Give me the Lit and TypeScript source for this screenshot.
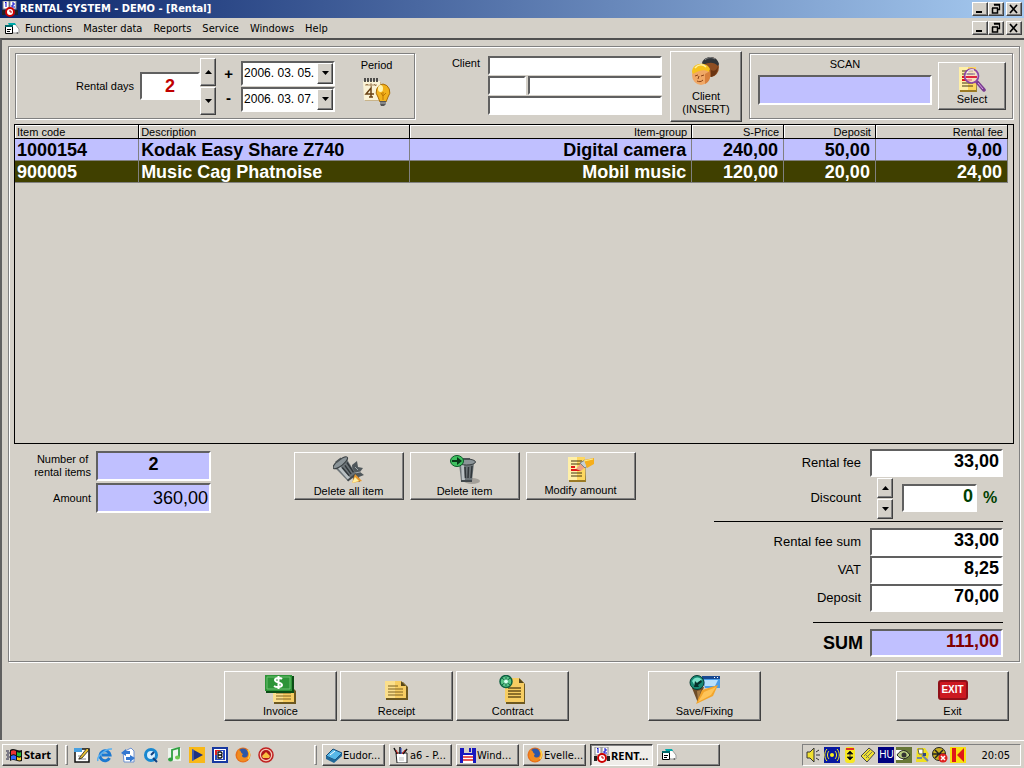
import { LitElement, html, css, svg } from "lit";
import { customElement, state } from "lit/decorators.js";

const icon = (w: number, h: number, body: unknown, vb = `0 0 ${w} ${h}`) =>
  html`<svg class="icon" width=${w} height=${h} viewBox=${vb} aria-hidden="true">${body}</svg>`;

const tri = (up: boolean) =>
  icon(7, 4, up ? svg`<path d="M3.5 0L7 4H0z"/>` : svg`<path d="M0 0H7L3.5 4z"/>`);

const rentalMark = svg`
  <rect x="1" y="0" width="6" height="8" fill="#fff" stroke="#888"/><rect x="8" y="0" width="6" height="8" fill="#fff" stroke="#888"/>
  <path d="M3 2l1-1v5M10 2h2v2h-2v2h3" stroke="#00c" fill="none"/>
  <path d="M0 9h3v5H0zM13 9h3v5h-3z" fill="#222"/>
  <circle cx="8" cy="11" r="4" fill="#fff" stroke="#c00" stroke-width="2"/><path d="M8 9v2h2" stroke="#c00" fill="none"/>`;

const formMark = svg`
  <path d="M5 3h6l4 5v4H9z" fill="#fff" stroke="#999"/><path d="M4 2h7l1 2H5z" fill="#0aa"/>
  <path d="M12 12l2-1v2z" fill="#555"/>
  <path d="M1.500 4.500h7v8h-7z" fill="#fff" stroke="#000"/><path d="M1 4h8v2H1z" fill="#066"/>
  <path d="M3 8.500h4M3 10.500h3" stroke="#000"/>`;

const calendar = () => icon(28, 30, svg`
  <path d="M2 23L1 4h17l2 19z" fill="#c9b48a"/><path d="M0 3h17l1 19H1z" fill="#fbf3d6"/>
  <path d="M2 0v4M5 0v4M8 0v4M11 0v4M14 0v4" stroke="#222" stroke-width="1.500"/>
  <path d="M3 8V6l1 1 1-1v2M7 6h2v2H7zM11 8V6l2 2V6" stroke="#886030" fill="none" stroke-width=".7"/>
  <path d="M8 19V10L3 16h8M6 19h4" fill="none" stroke="#6a4214" stroke-width="1.500"/>
  <path d="M20 6a8 8 0 0 0-5 13l2 5h6l2-5a8 8 0 0 0-5-13z" fill="#f2b21c" stroke="#a86c08"/>
  <ellipse cx="17.500" cy="10.500" rx="2.500" ry="3.500" fill="#fff3b0"/>
  <path d="M20 14v8M18 15l2 3 3-3" stroke="#c07800" fill="none"/>
  <path d="M17 23h6v3l-2 2h-3l-1-2z" fill="#555"/><path d="M17 25h6" stroke="#bbb"/>`);

const people = () => icon(30, 30, svg`
  <ellipse cx="20" cy="11" rx="8" ry="10" fill="#8f4f24"/><path d="M20 14c3 2 6 0 7-4 0 7-3 10-7 11z" fill="#6b3513"/>
  <path d="M11 7c2-7 14-9 17 1l-1 2c-4-4-9-4-15-1z" fill="#303438"/><path d="M14 4c3-3 7-3 10-1" stroke="#888" fill="none"/>
  <ellipse cx="10" cy="19" rx="9" ry="10" fill="#f0a866"/><path d="M14 28c5-2 6-8 5-13l-5 3z" fill="#d8803c"/>
  <path d="M1 16C1 6 16 5 19 13l-1 3c-4-3-10-2-16 2z" fill="#f6c21c"/><path d="M4 12c3-4 8-4 11-1" stroke="#fff0a0" stroke-width="1.500" fill="none"/>
  <path d="M4 20l3-1M10 20l3-1M6 25c2 1 4 1 6-1M8 20l-1 3" stroke="#8a4216" fill="none"/>`);

const sheet = (x: number, y: number) => svg`
  <path d="M${x + 1} ${y + 2}h16l1 23h-17z" fill="#9a7a24"/><path d="M${x} ${y}h17v23h-17z" fill="#fdd760"/>
  <path d="M${x} ${y}h9v23h-9z" fill="#fff0a8"/>
  <path d="M${x + 3} ${y + 4}h11M${x + 3} ${y + 7}h11M${x + 3} ${y + 16}h11M${x + 3} ${y + 19}h11" stroke="#443410"/>
  <path d="M${x + 3} ${y + 10}h4M${x + 3} ${y + 13}h10" stroke="#e01818" stroke-width="2"/>`;

const search = () => icon(28, 26, svg`${sheet(1, 0)}
  <path d="M19 15l7 8" stroke="#7a3c90" stroke-width="3.500" stroke-linecap="round"/><path d="M20 16l5 6" stroke="#d8a0e8"/>
  <circle cx="13.500" cy="9" r="7" fill="#f4e6fa" fill-opacity=".6" stroke="#8a44a4" stroke-width="1.700"/>
  <path d="M8 10h11" stroke="#e02840" stroke-width="2"/><path d="M9 7h8" stroke="#806890"/><path d="M9 6c1-3 4-4 7-3" stroke="#fff" fill="none"/>`);

const bin = svg`
  <path d="M3 7h15l-2 18H5z" fill="#6b7377"/><path d="M5 8h3l1 17H6z" fill="#b9c0c3"/>
  <path d="M9 11l.5 11M12.500 11l-.5 11M16 10l-1 12" stroke="#30363a" stroke-width="1.500"/>
  <path d="M5 24h11v2H5z" fill="#42484c"/>
  <ellipse cx="10.500" cy="6" rx="9" ry="3" fill="#8b9498" stroke="#3b4144"/><path d="M7 3h7" stroke="#4c5356" stroke-width="2"/>`;

const deleteAll = () => icon(32, 30, svg`
  <path d="M19 10l5-4 1 6 5 1-3 4 4 3-5 2 1 5-7-2z" fill="#50585c"/>
  <path d="M22 12l3 3M22 18l5-1" stroke="#a0a8ac"/>
  <g transform="translate(2 0) rotate(-38 10.500 14) scale(.98)">${bin}</g>
  <path d="M19 28l3-9 7 7z" fill="#e8982c"/><path d="M19 28l3-6 4 4z" fill="#fff0a0"/>`);

const deleteItem = () => icon(30, 30, svg`
  <ellipse cx="22" cy="26" rx="8" ry="3" fill="#a5a19a"/><g transform="translate(6 1)">${bin}</g>
  <ellipse cx="7" cy="6" rx="6.500" ry="5.500" fill="#3fc060" stroke="#0c5a28"/><path d="M2 5h5V2l5 4-5 4V7H2z" fill="#083818"/>`);

const modify = () => icon(28, 28, svg`${sheet(1, 1)}
  <path d="M9 13l6-7 5 3-6 6z" fill="#eda285"/><path d="M13 7l5-3 4 5-4 3z" fill="#c8d0d4" stroke="#7c8488"/>
  <path d="M17 4l10-2v6l-7 4z" fill="#f5ae1c"/><path d="M17 5l9-2" stroke="#fff08c"/>`);

const note = (x: number, y: number) => svg`
  <path d="M${x + 1} ${y + 1}h17l5 5v13h-22z" fill="#6d5820"/><path d="M${x} ${y}h16l5 5v12h-21z" fill="#f7cd62"/>
  <path d="M${x} ${y}h10v17h-10z" fill="#fbdf8c"/><path d="M${x + 16} ${y}v5h5z" fill="#57481c"/>
  <path d="M${x + 3} ${y + 5}h10M${x + 3} ${y + 8}h15M${x + 3} ${y + 11}h15M${x + 3} ${y + 14}h15" stroke="#7c6020"/>`;

const invoice = () => icon(32, 30, svg`${note(8, 10)}
  <path d="M1 1h28v17H1z" fill="#0b4c16"/><path d="M0 0h27v16H0z" fill="#2d9438"/><path d="M2 2h23v12H2z" fill="none" stroke="#6cc070"/>
  <path d="M17 4c-2-2-7-1-7 1 0 3 7 2 7 5 0 2-5 3-8 1M13.500 1v13" stroke="#fff" stroke-width="2" fill="none"/>`);
const receipt = () => icon(24, 30, note(0, 6));
const contract = () => icon(27, 30, svg`
  <path d="M7 4h14l5 5v20H7z" fill="#6d5820"/><path d="M6 3h14l5 5v19H6z" fill="#f7cd62"/><path d="M20 3v5h5z" fill="#57481c"/>
  <path d="M9 13h13M9 16h13M9 19h13M9 22h13" stroke="#6a5018" stroke-width="1.300"/>
  <circle cx="7" cy="6.500" r="6" fill="#5ac488" stroke="#0c6040" stroke-width="1.500"/><path d="M3 3l8 7M11 3l-8 7M7 2v9" stroke="#186848"/><circle cx="7" cy="6.500" r="2" fill="#d8fff0"/>`);
const save = () => icon(32, 30, svg`
  <path d="M13 1h18v12H16z" fill="#4a9ce8"/><path d="M13 1h18v3H13z" fill="#184890"/><path d="M15 5h14l-3 6H16z" fill="#b8e0fc"/>
  <path d="M25 2.500h1M28 2.500h1" stroke="#fff"/>
  <path d="M3 13l12-1-6 16z" fill="#6d4c28"/><path d="M8 16l4-1-3 11z" fill="#a87c44"/>
  <path d="M7 29l6-14 16-5-5 11z" fill="#f3a52c"/><path d="M9 27l6-10 12-5-5 8z" fill="#ffc458"/>
  <circle cx="8" cy="7.500" r="7" fill="#188a74" stroke="#083c34"/><path d="M3 6c3-5 8-4 10-1l-4 2-3 4z" fill="#7ce0c8"/><path d="M5 12l1-6 2 2 4-3 1 2-4 3 1 2z" fill="#06302a"/>`);

const winIcon = (kind: string) => icon(16, 14,
  kind === "min" ? svg`<path d="M4 9h6v2H4z"/>` :
  kind === "restore" ? svg`<path d="M6.500 3v-.5h5v5H10M6 3h6" fill="none" stroke="#000" stroke-width="1.300"/><path d="M4.500 6v5h5V6M4 6h6" fill="none" stroke="#000" stroke-width="1.500"/>` :
  svg`<path d="M4 3l7 8M11 3l-7 8" stroke="#000" stroke-width="1.700"/>`);

const flag = () => icon(17, 16, svg`
  <path d="M0 4h3M1 6h3M0 8h3M1 10h3M0 12h3" stroke="#224" stroke-width="1"/>
  <path d="M4 3c4-3 8 2 12 0v11c-4 2-8-3-12 0z" fill="#111"/>
  <path d="M5 4c2-1 3-1 5 0v4c-2-1-3-1-5 0z" fill="#e33"/><path d="M11 5c2 1 3 1 4 0v4c-1 1-3 0-4 0z" fill="#2b3"/>
  <path d="M5 9c2-1 3-1 5 0v4c-2-1-3-1-5 0z" fill="#36f"/><path d="M11 10c2 1 3 1 4 0v3c-1 1-3 0-4 0z" fill="#fc2"/>`);

const firefox = svg`<circle cx="8" cy="8" r="7.500" fill="#e8701a"/><circle cx="8" cy="6.500" r="5" fill="#2c58a8"/><path d="M3 3c4 0 2 3 5 4-3 3 2 5 6 2-1 7-11 7-12 0z" fill="#f08c20"/><path d="M13 3c2 3 2 6 0 9" stroke="#ffd040" stroke-width="1.500" fill="none"/>`;

const quick: [string, unknown][] = [
  ["Show Desktop", svg`<rect x="1" y="2" width="14" height="13" fill="#fff" stroke="#111" stroke-width="1.500"/><path d="M0 1h8v4H0z" fill="#48a0e0"/><path d="M4 12h8M4 9h4" stroke="#888"/><path d="M6 10l7-9 2 2-7 8-3 1z" fill="#e8c030" stroke="#222" stroke-width=".8"/>`],
  ["Internet Explorer", svg`<path d="M12.500 11a5 5 0 1 1 .5-3H5" fill="none" stroke="#1c78d0" stroke-width="3"/><path d="M1 14c-2-4 8-13 14-12" stroke="#58b0f0" stroke-width="1.500" fill="none"/>`],
  ["Outlook Express", svg`<path d="M3 5l8-4 3 3v11H4z" fill="#fff" stroke="#6c90d0"/><path d="M1 6l5-4v2h4v3H6v2zM15 11l-5-3v2H6v3h4v2z" fill="#3478d0"/>`],
  ["QuickTime", svg`<circle cx="8" cy="8" r="5.500" fill="#d8f0ff" stroke="#1888d0" stroke-width="3"/><path d="M8 8l3-3M10 11l4 4" stroke="#104080" stroke-width="2"/>`],
  ["iTunes", svg`<rect x="2" y="1" width="13" height="13" fill="#eef4ee"/><path d="M6 12V3l7-2v9" fill="none" stroke="#30a040" stroke-width="1.800"/><ellipse cx="4.500" cy="12.500" rx="2.500" ry="2" fill="#30a040"/><ellipse cx="11.500" cy="10.500" rx="2.500" ry="2" fill="#70c850"/>`],
  ["Player", svg`<rect width="16" height="16" fill="#f8b818"/><path d="M3 2l11 6-11 6z" fill="#203080"/><path d="M4 2v12" stroke="#6080d0"/>`],
  ["B", svg`<rect x="1" y="1" width="14" height="14" fill="#fff" stroke="#1838a0" stroke-width="2"/><path d="M3 3h5v5H3z" fill="#e02020"/><path d="M8 3h5v10H8zM3 8h5v5H3z" fill="#2848c0"/><path d="M5 4h6v8H5z" fill="#fff"/><path d="M6 5h3l1 1v1L9 8l1 1v1l-1 1H6zM6 8h3" fill="none" stroke="#111" stroke-width="1.300"/>`],
  ["Firefox", firefox],
  ["Opera", svg`<circle cx="8" cy="8" r="7" fill="#f4c8b8" stroke="#c02020" stroke-width="1.500"/><circle cx="8" cy="8" r="5" fill="#b01818"/><path d="M4 9l4-4 4 4-1 2H5z" fill="#f8c040"/>`],
];

const tasks: [string, unknown, boolean?][] = [
  ["Eudor...", svg`<path d="M0 9l7-7 9 4-7 7z" fill="#58b8e8" stroke="#104878"/><path d="M0 9v3l8 4 8-7V6l-7 7z" fill="#206898"/><path d="M4 8l5-4" stroke="#fff"/>`],
  ["a6 - P...", svg`<path d="M3 6h11v10H4z" fill="#fff" stroke="#222"/><path d="M4 7L1 1M7 7V0M10 7l4-5" stroke="#111" stroke-width="1.500"/><path d="M3 3l2 4M12 3l-3 4" stroke="#d02020"/><path d="M8 1v6" stroke="#2040d0"/><path d="M6 10h5v4H6z" fill="#ddd"/>`],
  ["Wind...", svg`<path d="M0 1h16v15H0z" fill="#1818c0"/><path d="M4 0h8v6H4z" fill="#d4d0c8"/><path d="M9 1h2v4H9z" fill="#1818c0"/><path d="M3 8h10v8H3z" fill="#fff"/><path d="M3 10h10M3 13h10" stroke="#e02020" stroke-width="1.500"/>`],
  ["Evelle...", firefox],
  ["RENT...", rentalMark, true],
  ["", formMark],
];

const tray: unknown[] = [
  svg`<path d="M1 5h3l4-4v14l-4-4H1z" fill="#f0e030" stroke="#333"/><path d="M10 5l3-2M10 8h4M10 11l3 2" stroke="#333"/>`,
  svg`<rect width="16" height="16" fill="#0818a0"/><circle cx="8" cy="8" r="2" fill="#f8f020"/><path d="M5 4c-2 2-2 6 0 8M11 4c2 2 2 6 0 8M3 2c-3 3-3 9 0 12M13 2c3 3 3 9 0 12" stroke="#f8f020" fill="none"/>`,
  svg`<rect x="3" y="0" width="10" height="16" rx="3" fill="#f8e820"/><path d="M4 1h8v2H4z" fill="#e03020"/><path d="M8 4l3 3H5zM8 13l3-3H5zM8 6v5" stroke="#222" stroke-width=".8"/>`,
  svg`<path d="M1 9l8-8 6 5-8 9z" fill="#f0e030" stroke="#444"/><path d="M4 9l6-6M6 11l6-6M5 7l4 4" stroke="#775"/>`,
  null,
  svg`<rect width="16" height="16" fill="#687838"/><path d="M0 3h7v10H0z" fill="#fff"/><path d="M1 8c4-6 9-6 13 0-4 5-9 5-13 0z" fill="#b8cc80" stroke="#222"/><circle cx="8" cy="8" r="2.500" fill="#333"/>`,
  svg`<path d="M3 1h8l4 6-2 8H2z" fill="#f0e020"/><path d="M4 2h5v5H5z" fill="#fff" stroke="#664"/><path d="M8 8l6 6M3 11h5" stroke="#7888a0" stroke-width="2"/><path d="M9 6h3v3H9z" fill="#304880"/>`,
  svg`<circle cx="7" cy="7" r="6.500" fill="#c8b020" stroke="#222"/><path d="M3 3l8 8M11 3l-8 8M1 7h12" stroke="#222" stroke-width="1.500"/><circle cx="11" cy="11" r="4.500" fill="#e02020"/><path d="M9 9l4 4M13 9l-4 4" stroke="#fff" stroke-width="1.500"/>`,
  svg`<rect width="16" height="16" fill="#f8e010"/><path d="M2 1h4v14H2zM14 1v14L7 8z" fill="#e01818"/>`,
];

interface Item { code: string; desc: string; group: string; price: string; deposit: string; fee: string; }

@customElement("app-root")
export class AppRoot extends LitElement {
  @state() private selected = 1;

  private items: Item[] = [
    { code: "1000154", desc: "Kodak Easy Share Z740", group: "Digital camera", price: "240,00", deposit: "50,00", fee: "9,00" },
    { code: "900005", desc: "Music Cag Phatnoise", group: "Mobil music", price: "120,00", deposit: "20,00", fee: "24,00" },
  ];

  static styles = css`
    :host { display: block; --face: #d4d0c8; --lilac: #c0c0ff; color: #000; background: var(--face);
      font: 11px/13px "Liberation Sans", Arial, sans-serif; }
    * { box-sizing: border-box; }
    button, input, select { font: inherit; color: inherit; margin: 0; padding: 0; border-radius: 0; }
    .icon { display: block; flex: none; }
    .page { min-height: 100vh; display: flex; flex-direction: column; }
    .ui { font-family: "DejaVu Sans Condensed", "DejaVu Sans", sans-serif; }

    .raised { background: var(--face); border: 1px solid; border-color: #fff #404040 #404040 #fff; box-shadow: inset -1px -1px #808080; }
    .sunken { background: #fff; border: 2px solid; border-color: #606060 #fff #fff #606060; outline: none; min-width: 0; width: 100%; }
    .groove { border: 1px solid #808080; box-shadow: inset 1px 1px #fff, 1px 1px #fff; }
    .lilac { background: var(--lilac); }

    .title { height: 18px; display: flex; align-items: center; padding: 0 2px; gap: 2px; color: #fff;
      background: linear-gradient(90deg, #0a246a, #a6caf0); }
    .title h1 { margin: 0; flex: 1; font: bold 11px/16px "DejaVu Sans Condensed", "DejaVu Sans", sans-serif; }
    .wins { display: flex; }
    .wins button { width: 16px; height: 14px; padding: 0; overflow: hidden; }
    .wins button .icon { margin: -1px; }
    .wins button:last-child { margin-left: 2px; }
    .menu { height: 20px; display: flex; align-items: center; padding: 0 2px 0 4px; }
    .menu nav { flex: 1; display: flex; gap: 11px; padding-left: 5px; }
    .menu nav button { border: 0; background: none; }

    .mdi { flex: 1; display: flex; flex-direction: column; border-top: 2px solid #505050; border-left: 2px solid #606060; padding: 6px 4px 19px 6px; }
    .frame { flex: 1; display: flex; flex-direction: column; padding: 3px 5px 4px; }
    .top { display: grid; grid-template-columns: 400px 1fr 72px 271px; padding: 0 1px; height: 72px; align-items: center; }
    .period { height: 66px; display: flex; align-items: center; padding-left: 60px; }
    .period > label { margin-right: 6px; }
    .days { width: 60px; height: 28px; text-align: center; color: #c00000; flex: none; }
    .big { font-size: 18px; line-height: 22px; font-weight: bold; }
    .spin { display: flex; flex-direction: column; gap: 1px; width: 16px; flex: none; }
    .spin button { height: 28px; display: grid; place-items: center; }
    .signs { width: 25px; text-align: center; font: bold 15px/24px "Liberation Sans", sans-serif; }
    .dates { display: grid; gap: 1px; width: 94px; flex: none; }
    .date { display: flex; height: 25px; }
    .date select { appearance: none; border: 0; background: none; flex: 1; min-width: 0; font-size: 12px; padding-left: 1px; outline: none; }
    .date span { width: 16px; display: grid; place-items: center; pointer-events: none; }
    .cal { flex: 1; align-self: stretch; display: flex; flex-direction: column; align-items: center; gap: 6px; padding: 5px 0 0 4px; border: 0; background: none; }
    .client { display: grid; grid-template-columns: 1fr 174px; gap: 8px; padding-right: 8px; height: 60px; }
    .client > label { text-align: right; padding-top: 1px; }
    .lines { display: grid; grid-template-columns: 38px 1fr; gap: 1px 2px; grid-template-rows: repeat(3, 19px); }
    .wide { grid-column: span 2; }
    .act { display: flex; flex-direction: column; align-items: center; justify-content: center; }
    .insert { height: 71px; line-height: 13px; gap: 4px; }
    .scan { height: 66px; margin-left: 7px; display: grid; grid-template-columns: 174px 68px; justify-content: space-between; padding: 0 6px 0 8px; align-items: center; }
    .scan label { display: grid; gap: 4px; text-align: center; padding-bottom: 9px; }
    .scan input { height: 30px; }
    .pick { height: 48px; gap: 0; }

    .grid { flex: 1; min-height: 200px; border: 1px solid #000; padding-right: 5px; margin-top: 2px; }
    table { width: 100%; border-collapse: separate; border-spacing: 0; table-layout: fixed; }
    th { font-weight: normal; height: 14px; line-height: 12px; padding: 0 4px 0 2px; text-align: right; border-right: 1px solid #000; border-bottom: 1px solid #000; box-shadow: inset 1px 1px #fff; }
    td { height: 22px; padding: 0 5px 0 2px; line-height: 20px; font-size: 18px; font-weight: bold; text-align: right; white-space: nowrap; border-right: 1px solid #808080; border-bottom: 1px solid #808080; background: var(--lilac); }
    .l { text-align: left; }
    .sel td { background: #404000; color: #fff; }

    .bottom { display: grid; grid-template-columns: 197px 1fr 289px; padding: 5px 11px 0 0; }
    .counts { display: grid; grid-template-columns: 1fr 115px; align-items: center; align-content: start; column-gap: 5px; row-gap: 2px; padding-top: 2px; }
    .counts label { justify-self: end; text-align: center; }
    .counts input { height: 30px; }
    .c { text-align: center; padding-bottom: 3px; }
    .r { text-align: right; padding-right: 1px; }
    .plain { font-size: 18px; }
    .acts { display: flex; gap: 6px; justify-content: center; align-items: start; padding: 3px 0 0 4px; }
    .acts button { width: 110px; height: 48px; }
    .sums { display: grid; grid-template-columns: 1fr 133px; column-gap: 9px; align-items: center; font-size: 13px; line-height: 16px; }
    .sums label { text-align: right; }
    .sums input { height: 28px; padding: 0 2px 3px 0; }
    .disc { display: flex; align-items: center; padding-left: 7px; height: 42px; }
    .disc .spin button { height: 20px; }
    .disc input { width: 75px; margin-left: 9px; }
    .disc b { font-size: 16px; margin-left: 6px; }
    .green, .disc b { color: #004000; }
    .red { color: #800000; }
    hr { grid-column: 1 / -1; width: 100%; margin: 2px 0 6px; border: 0; border-top: 1px solid #000; }
    hr.short { width: 190px; justify-self: end; margin: 10px 0 6px; }
    .sums .total { font-size: 18px; font-weight: bold; margin-right: -2px; }

    .foot { display: grid; grid-template-columns: 213fr repeat(3, 113px) 73fr 113px 129fr 113px; column-gap: 3px; padding: 9px 11px 0 0; }
    .foot button { height: 50px; }
    .foot .n5 { grid-column: 6; }
    .foot .n6 { grid-column: 8; }
    .exit { width: 30px; height: 20px; margin: 5px 0; background: #cc1820; border: 2px solid #901018; border-radius: 3px; color: #fff; font: bold 10px/16px "Liberation Sans", sans-serif; }

    .bar { height: 28px; display: flex; align-items: center; padding: 1px 3px 0 2px; border-top: 1px solid #fff; }
    .bar button { height: 22px; display: flex; align-items: center; }
    .start { width: 56px; padding-left: 3px; gap: 1px; font: bold 11px/16px "Noto Sans", sans-serif; }
    .grip { width: 3px; height: 20px; border: 1px solid; border-color: #fff #808080 #808080 #fff; flex: none; }
    .start + .grip { margin-left: 7px; }
    .quick { display: flex; gap: 7px; margin: 0 40px 0 6px; }
    .quick button { border: 0; background: none; }
    .tasks { display: flex; flex: 1; gap: 4px; margin-left: 5px; min-width: 0; }
    .tasks button { width: 63px; padding-left: 3px; gap: 1px; white-space: nowrap; overflow: hidden; }
    .tasks .on { font: bold 11px/13px "Noto Sans", sans-serif; background: #efede9; border-color: #404040 #fff #fff #404040; box-shadow: inset 1px 1px #808080; }
    .tray { height: 22px; display: flex; align-items: center; gap: 2px; padding: 0 10px 0 3px; border: 1px solid; border-color: #808080 #fff #fff #808080; }
    .tray time { margin-left: 13px; }
    .lang { width: 16px; height: 16px; background: #000080; color: #fff; font: 10px/16px "Liberation Sans", sans-serif; text-align: center; }
  `;

  private wins() {
    return html`<div class="wins">
      <button class="raised" aria-label="Minimize">${winIcon("min")}</button>
      <button class="raised" aria-label="Restore">${winIcon("restore")}</button>
      <button class="raised" aria-label="Close">${winIcon("close")}</button>
    </div>`;
  }

  private spin(what: string) {
    return html`<div class="spin">
      <button class="raised" aria-label="Increase ${what}">${tri(true)}</button>
      <button class="raised" aria-label="Decrease ${what}">${tri(false)}</button>
    </div>`;
  }

  private date(label: string, value: string) {
    return html`<div class="date sunken"><select aria-label=${label}><option>${value}</option></select><span class="raised">${tri(false)}</span></div>`;
  }

  private sum(id: string, label: string, value: string, cls = "", labelCls = "") {
    return html`<label class=${labelCls} for=${id}>${label}</label><input id=${id} class="sunken big r ${cls}" .value=${value} />`;
  }

  render() {
    return html`<div class="page">
      <header class="title">${icon(16, 16, rentalMark)}<h1>RENTAL SYSTEM - DEMO - [Rental]</h1>${this.wins()}</header>
      <div class="menu ui">${icon(16, 14, formMark)}
        <nav>${["Functions", "Master data", "Reports", "Service", "Windows", "Help"].map((m) => html`<button>${m}</button>`)}</nav>
        ${this.wins()}
      </div>
      <main class="mdi">
        <section class="frame groove">
          <div class="top">
            <div class="period groove">
              <label for="days">Rental days</label>
              <input id="days" class="sunken days big" .value=${"2"} />
              ${this.spin("rental days")}
              <div class="signs"><div>+</div><div>-</div></div>
              <div class="dates">${this.date("From", "2006. 03. 05.")}${this.date("To", "2006. 03. 07.")}</div>
              <button class="cal">Period ${calendar()}</button>
            </div>
            <div class="client">
              <label for="client">Client</label>
              <div class="lines">
                <input id="client" class="sunken wide" />
                <input class="sunken" aria-label="Postal code" /><input class="sunken" aria-label="City" />
                <input class="sunken wide" aria-label="Address" />
              </div>
            </div>
            <button class="act insert raised">${people()}<span>Client<br />(INSERT)</span></button>
            <div class="scan groove">
              <label>SCAN<input class="sunken lilac" /></label>
              <button class="act pick raised">${search()}Select</button>
            </div>
          </div>
          <div class="grid">
            <table>
              <colgroup><col style="width:12.5%" /><col style="width:27.3%" /><col style="width:28.4%" /><col style="width:9.25%" /><col style="width:9.25%" /><col /></colgroup>
              <thead><tr><th class="l">Item code</th><th class="l">Description</th><th>Item-group</th><th>S-Price</th><th>Deposit</th><th>Rental fee</th></tr></thead>
              <tbody>${this.items.map((it, i) => html`<tr class=${i === this.selected ? "sel" : ""} @click=${() => (this.selected = i)}>
                <td class="l">${it.code}</td><td class="l">${it.desc}</td><td>${it.group}</td><td>${it.price}</td><td>${it.deposit}</td><td>${it.fee}</td></tr>`)}</tbody>
            </table>
          </div>
          <div class="bottom">
            <div class="counts">
              <label for="count">Number of<br />rental items</label><input id="count" class="sunken lilac big c" .value=${"2"} />
              <label for="amount">Amount</label><input id="amount" class="sunken lilac plain r" .value=${"360,00"} />
            </div>
            <div class="acts">
              <button class="act raised">${deleteAll()}Delete all item</button>
              <button class="act raised">${deleteItem()}Delete item</button>
              <button class="act raised">${modify()}Modify amount</button>
            </div>
            <div class="sums">
              ${this.sum("fee", "Rental fee", "33,00")}
              <label for="discount">Discount</label>
              <div class="disc">${this.spin("discount")}<input id="discount" class="sunken big r green" .value=${"0"} /><b>%</b></div>
              <hr />
              ${this.sum("feesum", "Rental fee sum", "33,00")}
              ${this.sum("vat", "VAT", "8,25")}
              ${this.sum("deposit", "Deposit", "70,00")}
              <hr class="short" />
              ${this.sum("total", "SUM", "111,00", "lilac red", "total")}
            </div>
          </div>
        </section>
        <div class="foot">
          <span></span>
          <button class="act raised">${invoice()}Invoice</button>
          <button class="act raised">${receipt()}Receipt</button>
          <button class="act raised">${contract()}Contract</button>
          <button class="act raised n5">${save()}Save/Fixing</button>
          <button class="act raised n6"><span class="exit">EXIT</span>Exit</button>
        </div>
      </main>
      <footer class="bar ui">
        <button class="start raised">${flag()}Start</button>
        <span class="grip"></span>
        <div class="quick">${quick.map(([name, g]) => html`<button aria-label=${name}>${icon(16, 16, g)}</button>`)}</div>
        <span class="grip"></span>
        <div class="tasks">${tasks.map(([name, g, on]) => html`<button class="raised ${on ? "on" : ""}" aria-label=${name || "Form"}>${icon(16, 16, g)}${name}</button>`)}</div>
        <div class="tray">${tray.map((g) => (g ? icon(16, 16, g) : html`<span class="lang">HU</span>`))}<time>20:05</time></div>
      </footer>
    </div>`;
  }
}
